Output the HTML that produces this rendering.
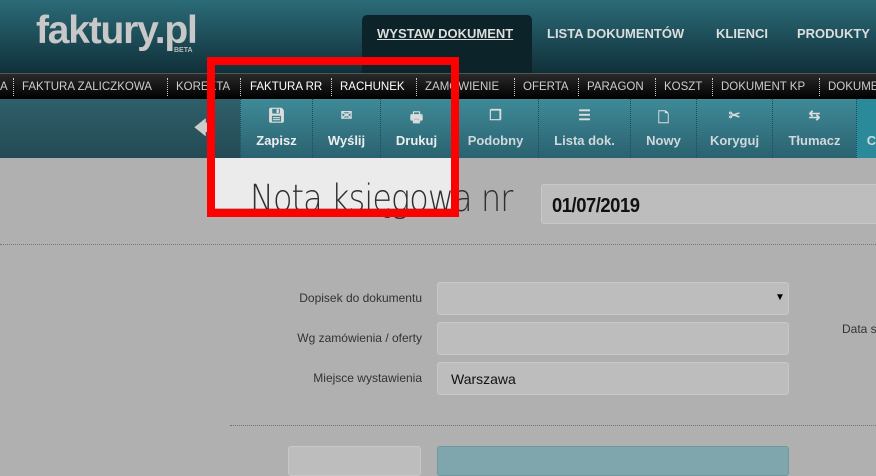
<!DOCTYPE html>
<html><head><meta charset="utf-8"><style>
*{margin:0;padding:0;box-sizing:border-box}
body{width:876px;height:460px;overflow:hidden;background:#b0b0b0;font-family:"Liberation Sans",sans-serif;position:relative}
.hdr{position:absolute;left:0;top:0;width:876px;height:73px;background:linear-gradient(#2b6b78,#103039)}
.logo{position:absolute;left:36px;top:9px;font:bold 39px "Liberation Sans",sans-serif;color:#c8c8c8;letter-spacing:-1.2px}
.beta{position:absolute;left:174px;top:47px;font:bold 7px sans-serif;color:#bbb}
.tab{position:absolute;left:362px;top:15px;width:170px;height:58px;background:#0b2329;border-radius:5px 5px 0 0}
.nav{position:absolute;top:26px;font:bold 13px "Liberation Sans",sans-serif;color:#ddd}
.sub{position:absolute;left:0;top:73px;width:876px;height:26px;background:linear-gradient(#2a2a2a,#000);border-top:1px solid #555}
.sub span{position:absolute;top:7px;font:11.5px "Liberation Sans",sans-serif;color:#ccc;white-space:nowrap}
.sep{position:absolute;top:4px;height:18px;border-left:1px dotted #ccc}
.tb{position:absolute;left:0;top:99px;width:876px;height:59px;background:linear-gradient(#3f8a98,#2a6270)}
.tbl{position:absolute;left:0;top:99px;width:240px;height:59px;background:linear-gradient(#2f5f6a,#234a54)}
.btn{position:absolute;top:99px;height:59px;border-left:1px dotted #1e4a55;color:#eee;text-align:center;font:bold 13px "Liberation Sans",sans-serif}
.btn i{display:block;height:34px;padding-top:8px;font-style:normal;font-size:14px;color:#ddd}
.btn.d{color:#cfd8da}
.hl{position:absolute;left:215px;top:158px;width:236px;height:50px;background:#ebebeb}
.red{position:absolute;left:207px;top:57px;width:252px;height:160px;border:8px solid #f00}
.title{position:absolute;left:250px;top:177px;font:300 37px "DejaVu Sans","Liberation Sans",sans-serif;color:#2f2f2f;letter-spacing:-1px;transform:scaleX(.86);transform-origin:left;white-space:nowrap}
.inp{position:absolute;background:#bdbdbd;border:1px solid #c8c8c8;border-radius:3px}
.lab{position:absolute;font:12px "Liberation Sans",sans-serif;color:#333;text-align:right;width:200px}
.dot{position:absolute;border-top:1px dotted #777}
</style></head><body>
<div class="hdr"></div>
<div class="logo">faktury.pl</div><div class="beta">BETA</div>
<div class="tab"></div>
<div class="nav" style="left:377px;text-decoration:underline">WYSTAW DOKUMENT</div>
<div class="nav" style="left:547px">LISTA DOKUMENTÓW</div>
<div class="nav" style="left:716px">KLIENCI</div>
<div class="nav" style="left:797px">PRODUKTY</div>
<div class="sub">
<span style="left:0">A</span><div class="sep" style="left:13px"></div>
<span style="left:22px">FAKTURA ZALICZKOWA</span><div class="sep" style="left:167px"></div>
<span style="left:176px">KOREKTA</span><div class="sep" style="left:240px"></div>
<span style="left:250px;color:#fff">FAKTURA RR</span><div class="sep" style="left:331px"></div>
<span style="left:340px;color:#fff">RACHUNEK</span><div class="sep" style="left:416px"></div>
<span style="left:425px">ZAMÓWIENIE</span><div class="sep" style="left:514px"></div>
<span style="left:523px">OFERTA</span><div class="sep" style="left:578px"></div>
<span style="left:587px">PARAGON</span><div class="sep" style="left:655px"></div>
<span style="left:664px">KOSZT</span><div class="sep" style="left:712px"></div>
<span style="left:721px">DOKUMENT KP</span><div class="sep" style="left:819px"></div>
<span style="left:828px">DOKUMENT</span>
</div>
<div class="tb"></div><div class="tbl"></div>
<div style="position:absolute;left:194px;top:116px;color:#ccc;font:bold 18px sans-serif">🡄</div>
<div class="btn" style="left:240px;width:72px"><i>💾︎</i>Zapisz</div>
<div class="btn" style="left:312px;width:68px"><i>✉︎</i>Wyślij</div>
<div class="btn" style="left:380px;width:72px"><i>🖶︎</i>Drukuj</div>
<div class="btn d" style="left:452px;width:86px"><i>❐</i>Podobny</div>
<div class="btn d" style="left:538px;width:92px"><i>☰</i>Lista dok.</div>
<div class="btn d" style="left:630px;width:66px"><i>🗋︎</i>Nowy</div>
<div class="btn d" style="left:696px;width:76px"><i>✂︎</i>Koryguj</div>
<div class="btn d" style="left:772px;width:84px"><i>⇆</i>Tłumacz</div>
<div class="btn d" style="left:856px;width:30px;background:#2a8a9a"><i></i>C</div>
<div class="hl"></div>
<div class="title">Nota księgowa nr</div>
<div class="inp" style="left:541px;top:184px;width:340px;height:40px"></div>
<div style="position:absolute;left:552px;top:195px;font:bold 20px 'Liberation Sans',sans-serif;color:#111;letter-spacing:-.5px;transform:scaleX(.92);transform-origin:left">01/07/2019</div>
<div class="dot" style="left:0;top:244px;width:876px"></div>
<div class="lab" style="left:222px;top:291px">Dopisek do dokumentu</div>
<div class="lab" style="left:222px;top:331px">Wg zamówienia / oferty</div>
<div class="lab" style="left:222px;top:371px">Miejsce wystawienia</div>
<div class="inp" style="left:437px;top:282px;width:352px;height:33px"></div>
<div style="position:absolute;left:775px;top:292px;font-size:10px">▼</div>
<div class="inp" style="left:437px;top:322px;width:352px;height:33px"></div>
<div class="inp" style="left:437px;top:362px;width:352px;height:33px"></div>
<div style="position:absolute;left:451px;top:371px;font:14px 'Liberation Sans',sans-serif;color:#111">Warszawa</div>
<div style="position:absolute;left:842px;top:322px;font:12px 'Liberation Sans',sans-serif;color:#333;white-space:nowrap">Data s</div>
<div class="dot" style="left:230px;top:425px;width:646px"></div>
<div class="inp" style="left:288px;top:446px;width:133px;height:30px"></div>
<div style="position:absolute;left:437px;top:446px;width:352px;height:30px;background:#7fa6ad;border-radius:3px;border:1px solid #6d98a0"></div>
<div class="red"></div>
</body></html>
